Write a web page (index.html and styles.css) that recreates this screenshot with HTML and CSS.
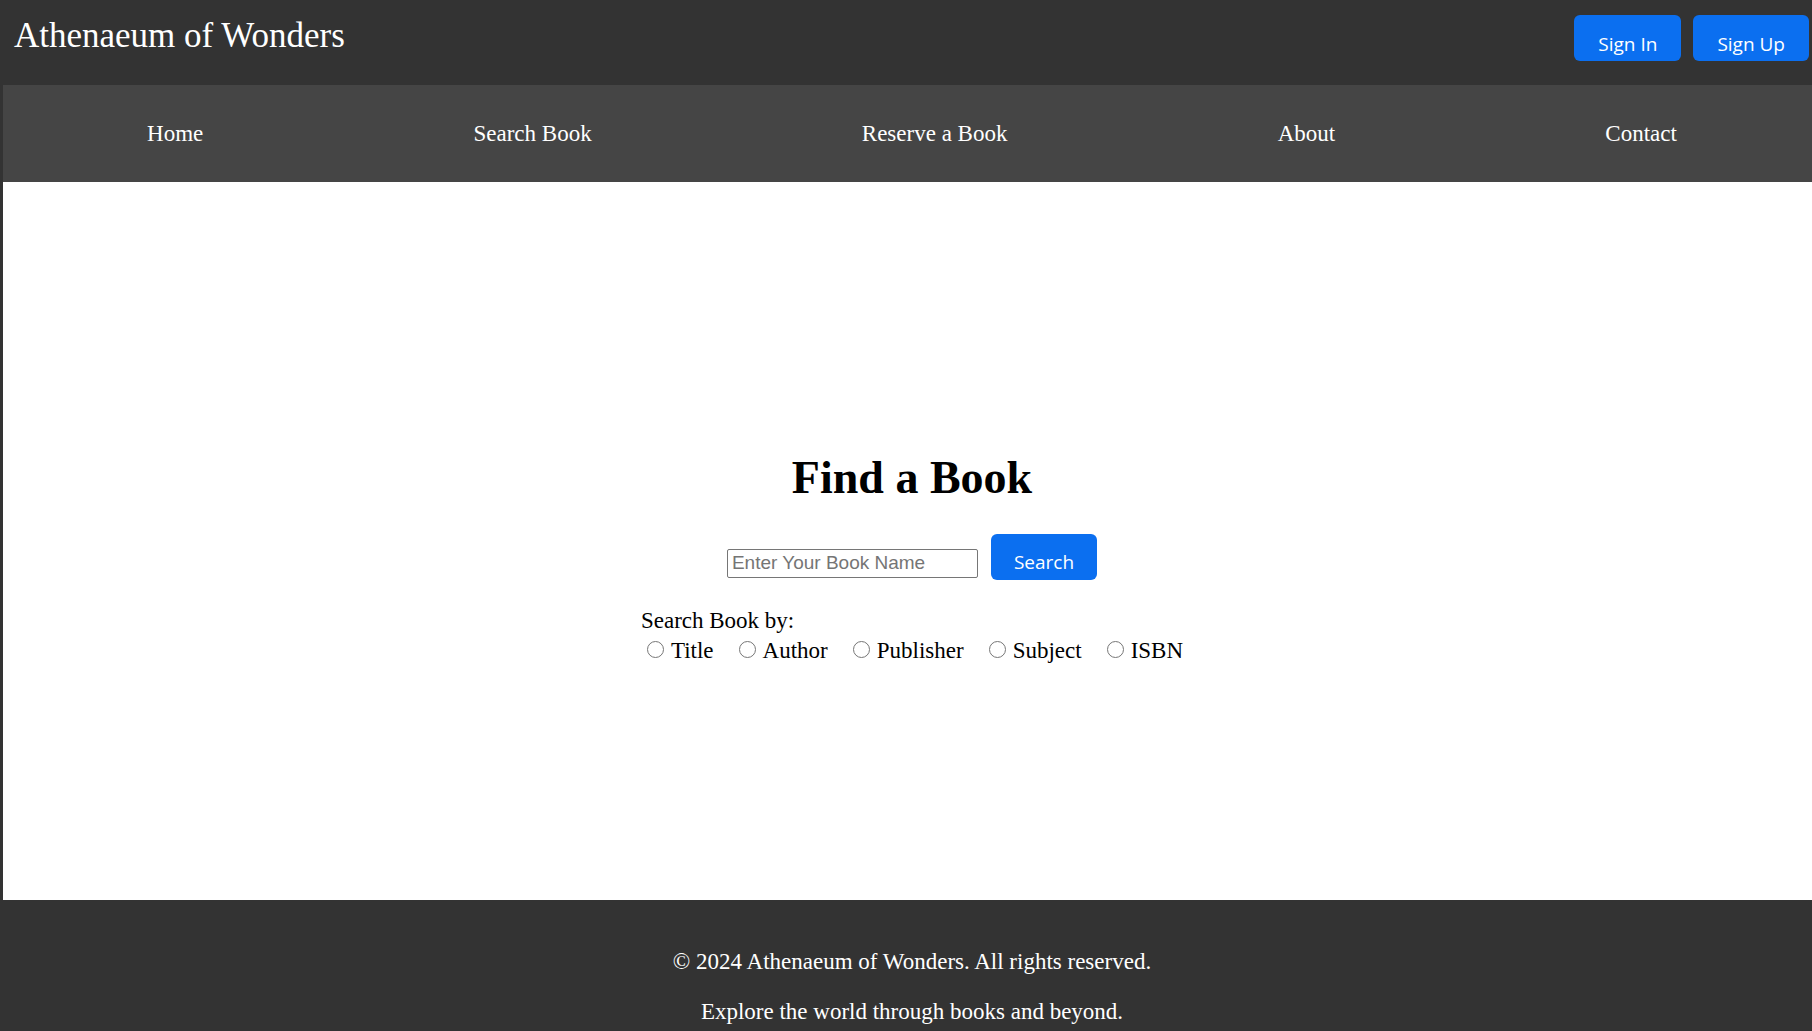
FILE: index.html
```html
<!DOCTYPE html>
<html lang="en">
<head>
<meta charset="utf-8">
<title>Athenaeum of Wonders</title>
<link rel="stylesheet" href="styles.css">
</head>
<body>
<header class="site-header">
  <h1 class="brand">Athenaeum of Wonders</h1>
  <div class="auth">
    <a class="btn" href="#">Sign In</a>
    <a class="btn" href="#">Sign Up</a>
  </div>
</header>
<nav class="main-nav">
  <ul class="nav-list">
    <li><a href="#">Home</a></li>
    <li><a href="#">Search Book</a></li>
    <li><a href="#">Reserve a Book</a></li>
    <li><a href="#">About</a></li>
    <li><a href="#">Contact</a></li>
  </ul>
</nav>
<main class="content">
  <h2 class="page-title">Find a Book</h2>
  <form class="search-form">
    <input class="search-input" type="text" placeholder="Enter Your Book Name">
    <button class="btn" type="button">Search</button>
  </form>
  <div class="options">
    <div class="options-title">Search Book by:</div>
    <div class="radio-row">
      <label class="opt"><input type="radio" name="by">Title</label>
      <label class="opt"><input type="radio" name="by">Author</label>
      <label class="opt"><input type="radio" name="by">Publisher</label>
      <label class="opt"><input type="radio" name="by">Subject</label>
      <label class="opt"><input type="radio" name="by">ISBN</label>
    </div>
  </div>
</main>
<footer class="site-footer">
  <p>&copy; 2024 Athenaeum of Wonders. All rights reserved.</p>
  <p>Explore the world through books and beyond.</p>
</footer>
</body>
</html>
```
FILE: styles.css
```css
html, body {
  margin: 0;
  padding: 0;
}
body {
  background: #333333;
  padding-left: 3px;
  font-family: "Liberation Serif", "Times New Roman", serif;
  font-size: 23px;
  color: #000;
}
.site-header {
  height: 85px;
  box-sizing: border-box;
  padding: 15px 3px 0 11px;
  display: flex;
  justify-content: space-between;
  align-items: flex-start;
  background: #333333;
}
.brand {
  margin: 1px 0 0 0;
  font-size: 35px;
  font-weight: normal;
  color: #ffffff;
  line-height: normal;
}
.auth {
  display: flex;
  gap: 12px;
}
.btn {
  display: inline-block;
  background: #0b6ff0;
  color: #ffffff;
  border: none;
  border-radius: 6px;
  font-family: "Open Sans", "Noto Sans", sans-serif;
  font-size: 19px;
  line-height: 26px;
  padding: 16px 24px 4px;
  text-decoration: none;
  cursor: pointer;
}
.main-nav {
  background: #454545;
  height: 97px;
  padding-left: 9px;
}
.nav-list {
  list-style: none;
  margin: 0;
  padding: 0;
  height: 100%;
  display: flex;
  justify-content: space-around;
  align-items: center;
}
.nav-list a {
  color: #ffffff;
  text-decoration: none;
  font-size: 23px;
}
.content {
  background: #ffffff;
  height: 718px;
  box-sizing: border-box;
  padding: 269px 0 0 9px;
  display: flex;
  flex-direction: column;
  align-items: center;
}
.page-title {
  margin: 0;
  font-size: 46px;
  font-weight: bold;
  line-height: normal;
}
.search-form {
  margin: 30px 0 0 0;
  display: flex;
  align-items: baseline;
  gap: 13px;
}
.search-input {
  width: 251px;
  height: 29px;
  box-sizing: border-box;
  border: 1px solid #767676;
  border-radius: 2px;
  padding: 1px 4px;
  font-family: "Liberation Sans", Arial, sans-serif;
  font-size: 19px;
  color: #000;
}
.search-input::placeholder {
  color: #757575;
}
.search-form .btn {
  padding: 15px 23px 5px;
}
.options {
  margin-top: 28px;
  text-align: left;
}
.options-title {
  line-height: normal;
}
.radio-row {
  margin-top: 4px;
  display: flex;
  gap: 19px;
  align-items: baseline;
}
.opt input {
  width: 17px;
  height: 17px;
  margin: 3px 7px 0 6px;
  vertical-align: baseline;
}
.site-footer {
  background: #333333;
  color: #ffffff;
  text-align: center;
  padding: 25px 0 24px 9px;
}
.site-footer p {
  margin: 24px 0;
}
```
